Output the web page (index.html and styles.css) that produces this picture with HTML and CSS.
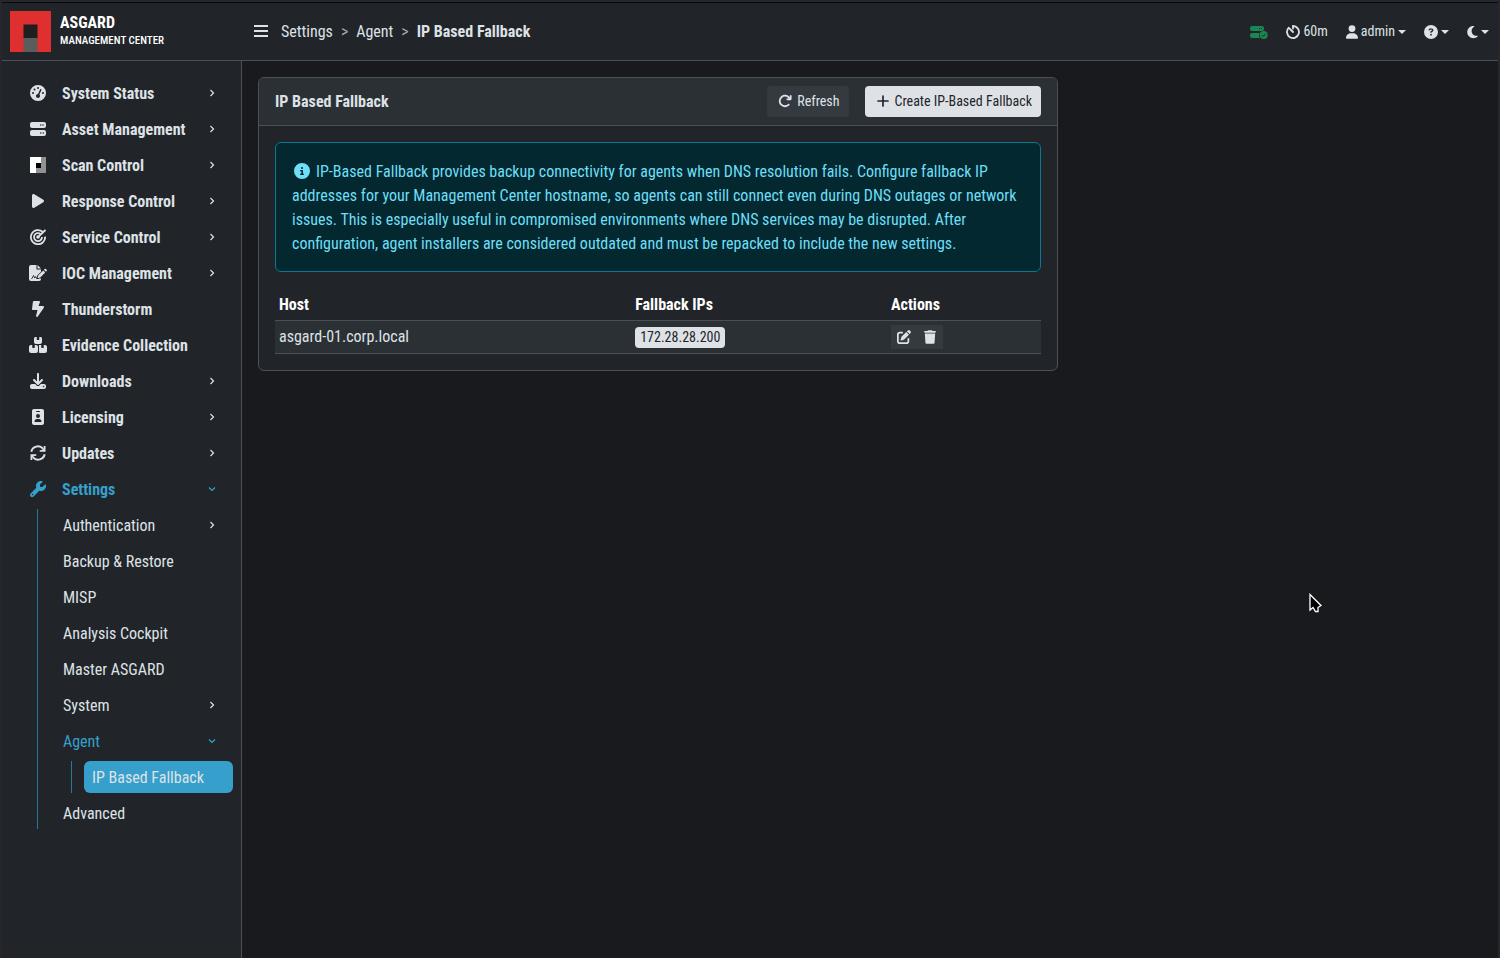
FILE: index.html
```html
<!DOCTYPE html>
<html lang="en">
<head>
    <meta charset="UTF-8">
    <meta name="viewport" content="width=device-width, initial-scale=1.0">
    <title>ASGARD Management Center - IP Based Fallback</title>
    <link rel="stylesheet" href="styles.css">
</head>
<body>

<!-- icons shared by the menu items -->
<svg class="sprite" aria-hidden="true">
    <symbol id="chevron-right" viewBox="0 0 10 10"><path d="M3.5 2l3 3-3 3" fill="none" stroke="currentColor" stroke-width="1.2"/></symbol>
    <symbol id="chevron-down" viewBox="0 0 10 10"><path d="M2 3.500l3 3 3-3" fill="none" stroke="currentColor" stroke-width="1.2"/></symbol>
</svg>

<header class="topbar">
    <a class="brand" href="#">
        <svg class="brand-logo" viewBox="0 0 41 41" aria-hidden="true">
            <path fill="#df2f2f" d="M0 0h41v41H0z"/>
            <path fill="#1f1f1f" d="M13.500 13.500h14v14h-14z"/>
            <path fill="#5b5d5c" d="M13.500 27h14v14h-14z"/>
        </svg>
        <span class="brand-text">
            <span class="brand-name">ASGARD</span>
            <span class="brand-sub">MANAGEMENT CENTER</span>
        </span>
    </a>
    <button class="menu-toggle" type="button" aria-label="Toggle menu">
        <svg width="14" height="13" viewBox="0 0 14 13"><path fill="currentColor" d="M0 0h14v2H0zM0 5h14v2H0zM0 10h14v2H0z"/></svg>
    </button>
    <nav class="breadcrumb" aria-label="Breadcrumb">
        <a href="#">Settings</a><span class="sep">&gt;</span><a href="#">Agent</a><span class="sep">&gt;</span><strong>IP Based Fallback</strong>
    </nav>
    <div class="top-actions">
        <a class="top-item status" href="#" aria-label="Server status">
            <svg width="18" height="14" viewBox="0 0 18 14">
                <path fill="currentColor" fill-rule="evenodd" d="M2 1h10a2 2 0 0 1 2 2v1a2 2 0 0 1-2 2H2a2 2 0 0 1-2-2V3a2 2 0 0 1 2-2zM9 3v1h1V3zM11 3v1h1V3zM2 8h7.500a4.800 4.800 0 0 0 .5 5H2a2 2 0 0 1-2-2v-1a2 2 0 0 1 2-2z"/>
                <circle cx="13.700" cy="10" r="4" fill="currentColor"/>
                <path d="M11.800 10l1.500 1.500 2.400-2.700" fill="none" stroke="#212529"/>
            </svg>
        </a>
        <a class="top-item session" href="#">
            <svg width="14" height="14" viewBox="0 0 14 14"><path d="M7 3.500V1a6 6 0 1 1-4.200 1.700M4 4l3 3" fill="none" stroke="currentColor" stroke-width="1.800" stroke-linecap="round"/></svg>
            <span>60m</span>
        </a>
        <button class="top-item user" type="button">
            <svg width="12" height="14" viewBox="0 0 448 512"><path fill="currentColor" d="M224 256A128 128 0 1 0 224 0a128 128 0 1 0 0 256zm-45.700 48C79.800 304 0 383.800 0 482.300C0 498.700 13.300 512 29.700 512H418.300c16.400 0 29.700-13.300 29.700-29.700C448 383.800 368.200 304 269.700 304H178.300z"/></svg>
            <span>admin</span>
            <i class="caret"></i>
        </button>
        <button class="top-item help" type="button" aria-label="Help">
            <svg width="14" height="14" viewBox="0 0 512 512"><path fill="currentColor" d="M256 512A256 256 0 1 0 256 0a256 256 0 1 0 0 512zM169.800 165.300c7.900-22.300 29.100-37.300 52.800-37.300h58.300c34.900 0 63.100 28.300 63.100 63.100c0 22.600-12.100 43.500-31.700 54.800L280 264.400c-.2 13-10.900 23.600-24 23.600c-13.300 0-24-10.700-24-24V250.500c0-8.600 4.600-16.500 12.100-20.800l44.300-25.400c4.700-2.700 7.600-7.700 7.600-13.100c0-8.400-6.800-15.100-15.100-15.100H222.600c-3.400 0-6.400 2.100-7.500 5.300l-.4 1.200c-4.400 12.500-18.200 19-30.600 14.600s-19-18.200-14.600-30.600l.4-1.200zM224 352a32 32 0 1 1 64 0 32 32 0 1 1 -64 0z"/></svg>
            <i class="caret"></i>
        </button>
        <button class="top-item theme" type="button" aria-label="Theme">
            <svg width="11" height="14" viewBox="0 0 384 512"><path fill="currentColor" d="M223.500 32C100 32 0 132.300 0 256S100 480 223.500 480c60.600 0 115.500-24.200 155.800-63.400c5-4.900 6.300-12.500 3.100-18.700s-10.100-9.700-17-8.500c-9.800 1.700-19.800 2.600-30.100 2.600c-96.900 0-175.500-78.800-175.500-176c0-65.800 36-123.100 89.300-153.300c6.100-3.500 9.200-10.500 7.700-17.300s-7.300-11.900-14.300-12.500c-6.300-.5-12.600-.8-19-.8z"/></svg>
            <i class="caret"></i>
        </button>
    </div>
</header>

<div class="layout">
    <nav class="sidebar" aria-label="Main menu">
        <ul class="menu">
            <li><a class="item" href="#">
                <svg class="icon" viewBox="0 0 512 512"><path fill="currentColor" d="M0 256a256 256 0 1 1 512 0A256 256 0 1 1 0 256zM288 96a32 32 0 1 0 -64 0 32 32 0 1 0 64 0zM256 416c35.300 0 64-28.700 64-64c0-17.400-6.900-33.100-18.100-44.600L366 161.700c5.300-12.100-.2-26.300-12.300-31.600s-26.300 .2-31.600 12.300L257.900 288c-.6 0-1.300 0-1.900 0c-35.300 0-64 28.700-64 64s28.700 64 64 64zM176 144a32 32 0 1 0 -64 0 32 32 0 1 0 64 0zM96 288a32 32 0 1 0 0-64 32 32 0 1 0 0 64zm352-32a32 32 0 1 0 -64 0 32 32 0 1 0 64 0z"/></svg>
                <span>System Status</span><svg class="chevron"><use href="#chevron-right"/></svg></a></li>
            <li><a class="item" href="#">
                <svg class="icon" viewBox="0 0 512 512"><path fill="currentColor" d="M64 32C28.700 32 0 60.700 0 96v64c0 35.300 28.700 64 64 64H448c35.300 0 64-28.700 64-64V96c0-35.300-28.700-64-64-64H64zm280 72a24 24 0 1 1 0 48 24 24 0 1 1 0-48zm48 24a24 24 0 1 1 48 0 24 24 0 1 1 -48 0zM64 288c-35.300 0-64 28.700-64 64v64c0 35.300 28.700 64 64 64H448c35.300 0 64-28.700 64-64V352c0-35.300-28.700-64-64-64H64zm280 72a24 24 0 1 1 0 48 24 24 0 1 1 0-48zm56 24a24 24 0 1 1 48 0 24 24 0 1 1 -48 0z"/></svg>
                <span>Asset Management</span><svg class="chevron"><use href="#chevron-right"/></svg></a></li>
            <li><a class="item" href="#">
                <svg class="icon" viewBox="0 0 16 16"><path fill="#fff" d="M0 0h16v16H0z"/><path fill="#919191" d="M11 0h5v16H6v-5h5z"/><path fill="#000" d="M6 6h5v5H6z"/></svg>
                <span>Scan Control</span><svg class="chevron"><use href="#chevron-right"/></svg></a></li>
            <li><a class="item" href="#">
                <svg class="icon" viewBox="0 0 384 512"><path fill="currentColor" d="M73 39c-14.800-9.100-33.400-9.400-48.500-.9S0 62.600 0 80V432c0 17.400 9.400 33.400 24.500 41.900s33.700 8.100 48.500-.9L361 297c14.300-8.700 23-24.200 23-41s-8.700-32.200-23-41L73 39z"/></svg>
                <span>Response Control</span><svg class="chevron"><use href="#chevron-right"/></svg></a></li>
            <li><a class="item" href="#">
                <svg class="icon" viewBox="0 0 16 16">
                    <g fill="none" stroke="currentColor" stroke-width="1.800">
                        <path d="M12.800 2.900A7.100 7.100 0 1 0 15.100 7.600"/>
                        <path d="M10.500 5A4 4 0 1 0 12 8"/>
                        <path d="M8 8l7.500-7"/>
                    </g>
                    <circle cx="8" cy="8" r="1.800" fill="currentColor"/>
                </svg>
                <span>Service Control</span><svg class="chevron"><use href="#chevron-right"/></svg></a></li>
            <li><a class="item" href="#">
                <svg class="icon" viewBox="0 0 18 16">
                    <path fill="currentColor" d="M2 0h5.500v4.500H12v2.300L8.300 10.500 7.500 13.500h4.500V14a2 2 0 0 1-2 2H2a2 2 0 0 1-2-2V2a2 2 0 0 1 2-2zM8.500 0L12 3.500H8.500z"/>
                    <path fill="currentColor" d="M14.200 5.500l2 2-5 5-2.700.7.700-2.700zM14.900 4.800l.7-.7a1 1 0 0 1 1.400 0l.6.6a1 1 0 0 1 0 1.400l-.7.700z"/>
                    <path d="M2.500 13.500h.5l1.500-3 1.200 2.500 1-1.500.8 2h2.500" fill="none" stroke="#212529" stroke-width=".9"/>
                </svg>
                <span>IOC Management</span><svg class="chevron"><use href="#chevron-right"/></svg></a></li>
            <li><a class="item" href="#">
                <svg class="icon" viewBox="0 0 384 512"><path fill="currentColor" d="M0 256L28.500 28c2-16 15.600-28 31.800-28H228.900c15 0 27.100 12.100 27.100 27.100c0 3.200-.6 6.500-1.700 9.500L208 160H347.300c20.200 0 36.700 16.400 36.700 36.700c0 7.400-2.200 14.600-6.400 20.700l-192.200 281c-5.900 8.600-15.600 13.700-25.900 13.700h-2.900c-15.700 0-28.500-12.800-28.500-28.500c0-2.300 .3-4.600 .9-6.900L176 288H32c-17.700 0-32-14.300-32-32z"/></svg>
                <span>Thunderstorm</span></a></li>
            <li><a class="item" href="#">
                <svg class="icon" viewBox="0 0 576 512"><path fill="currentColor" d="M248 0H208c-26.500 0-48 21.500-48 48V160c0 35.300 28.700 64 64 64H352c35.300 0 64-28.700 64-64V48c0-26.500-21.500-48-48-48H328V80c0 8.800-7.200 16-16 16H264c-8.800 0-16-7.200-16-16V0zM64 256c-35.300 0-64 28.700-64 64V448c0 35.300 28.700 64 64 64H224c35.300 0 64-28.700 64-64V320c0-35.300-28.700-64-64-64H184v80c0 8.800-7.200 16-16 16H120c-8.800 0-16-7.200-16-16V256H64zM352 512H512c35.300 0 64-28.700 64-64V320c0-35.300-28.700-64-64-64H472v80c0 8.800-7.200 16-16 16H408c-8.800 0-16-7.200-16-16V256H352c-15 0-28.800 5.100-39.700 13.800c4.900 10.400 7.700 22 7.700 34.200V464c0 12.200-2.800 23.800-7.700 34.200C323.200 506.900 337 512 352 512z"/></svg>
                <span>Evidence Collection</span></a></li>
            <li><a class="item" href="#">
                <svg class="icon" viewBox="0 0 512 512"><path fill="currentColor" d="M288 32c0-17.700-14.300-32-32-32s-32 14.300-32 32V274.700l-73.400-73.400c-12.500-12.500-32.800-12.500-45.300 0s-12.500 32.800 0 45.300l128 128c12.500 12.500 32.800 12.500 45.300 0l128-128c12.500-12.500 12.500-32.800 0-45.300s-32.800-12.500-45.300 0L288 274.700V32zM64 352c-35.300 0-64 28.700-64 64v32c0 35.300 28.700 64 64 64H448c35.300 0 64-28.700 64-64V416c0-35.300-28.700-64-64-64H346.500l-45.300 45.300c-25 25-65.500 25-90.500 0L165.500 352H64zm368 56a24 24 0 1 1 0 48 24 24 0 1 1 0-48z"/></svg>
                <span>Downloads</span><svg class="chevron"><use href="#chevron-right"/></svg></a></li>
            <li><a class="item" href="#">
                <svg class="icon" viewBox="0 0 384 512"><path fill="currentColor" d="M64 0C28.700 0 0 28.700 0 64V448c0 35.300 28.700 64 64 64H320c35.300 0 64-28.700 64-64V64c0-35.300-28.700-64-64-64H64zm96 320h64c44.200 0 80 35.800 80 80c0 8.800-7.200 16-16 16H96c-8.800 0-16-7.200-16-16c0-44.200 35.800-80 80-80zm-32-96a64 64 0 1 1 128 0 64 64 0 1 1 -128 0zM144 64h96c8.800 0 16 7.200 16 16s-7.200 16-16 16H144c-8.800 0-16-7.200-16-16s7.200-16 16-16z"/></svg>
                <span>Licensing</span><svg class="chevron"><use href="#chevron-right"/></svg></a></li>
            <li><a class="item" href="#">
                <svg class="icon" viewBox="0 0 16 16">
                    <path d="M1.300 6.800A6.800 6.800 0 0 1 13 3.600M14.700 9.200A6.800 6.800 0 0 1 3 12.400" fill="none" stroke="currentColor" stroke-width="2"/>
                    <path fill="currentColor" d="M15.500 1v5.800H9.700V5.300l2.200-.2 1.800-2V1zM.5 15V9.200h5.800v1.500l-2.200.2-1.800 2V15z"/>
                </svg>
                <span>Updates</span><svg class="chevron"><use href="#chevron-right"/></svg></a></li>
            <li><a class="item open" href="#">
                <svg class="icon" viewBox="0 0 512 512"><path fill="currentColor" d="M352 320c88.400 0 160-71.600 160-160c0-15.300-2.200-30.100-6.200-44.200c-3.100-10.800-16.400-13.200-24.300-5.300l-76.800 76.800c-3 3-7.100 4.700-11.300 4.700H336c-8.800 0-16-7.200-16-16V118.600c0-4.200 1.700-8.300 4.700-11.300l76.800-76.800c7.900-7.900 5.400-21.200-5.300-24.300C382.100 2.200 367.300 0 352 0C263.600 0 192 71.600 192 160c0 19.100 3.400 37.500 9.500 54.500L19.900 396.100C7.200 408.800 0 426.100 0 444.100C0 481.600 30.400 512 67.900 512c18 0 35.300-7.200 48-19.900L297.500 310.500c17 6.200 35.400 9.500 54.500 9.500zM80 408a24 24 0 1 1 0 48 24 24 0 1 1 0-48z"/></svg>
                <span>Settings</span><svg class="chevron"><use href="#chevron-down"/></svg></a>
                <ul class="submenu">
                    <li><a class="item" href="#"><span>Authentication</span><svg class="chevron"><use href="#chevron-right"/></svg></a></li>
                    <li><a class="item" href="#"><span>Backup &amp; Restore</span></a></li>
                    <li><a class="item" href="#"><span>MISP</span></a></li>
                    <li><a class="item" href="#"><span>Analysis Cockpit</span></a></li>
                    <li><a class="item" href="#"><span>Master ASGARD</span></a></li>
                    <li><a class="item" href="#"><span>System</span><svg class="chevron"><use href="#chevron-right"/></svg></a></li>
                    <li><a class="item open" href="#"><span>Agent</span><svg class="chevron"><use href="#chevron-down"/></svg></a>
                        <ul class="submenu nested">
                            <li><a class="item active" href="#" aria-current="page"><span>IP Based Fallback</span></a></li>
                        </ul>
                    </li>
                    <li><a class="item" href="#"><span>Advanced</span></a></li>
                </ul>
            </li>
        </ul>
    </nav>

    <main class="content">
        <section class="card">
            <div class="card-header">
                <h1>IP Based Fallback</h1>
                <button class="btn btn-dark" type="button">
                    <svg width="14" height="14" viewBox="0 0 512 512"><path fill="currentColor" d="M386.300 160H336c-17.700 0-32 14.300-32 32s14.300 32 32 32H464c17.700 0 32-14.300 32-32V64c0-17.700-14.300-32-32-32s-32 14.300-32 32v51.200L414.400 97.600c-87.500-87.500-229.300-87.500-316.800 0s-87.500 229.300 0 316.800s229.300 87.500 316.800 0c12.500-12.500 12.500-32.800 0-45.300s-32.800-12.500-45.300 0c-62.500 62.500-163.800 62.500-226.300 0s-62.500-163.800 0-226.300s163.800-62.500 226.300 0L386.300 160z"/></svg>
                    Refresh
                </button>
                <button class="btn btn-light" type="button">
                    <svg width="14" height="14" viewBox="0 0 14 14"><path d="M7 2v10M2 7h10" stroke="currentColor" stroke-width="1.700" stroke-linecap="round"/></svg>
                    Create IP-Based Fallback
                </button>
            </div>
            <div class="card-body">
                <p class="alert"><svg class="alert-icon" width="16" height="16" viewBox="0 0 512 512"><path fill="currentColor" d="M256 512A256 256 0 1 0 256 0a256 256 0 1 0 0 512zM216 336h24V272H216c-13.300 0-24-10.700-24-24s10.700-24 24-24h48c13.300 0 24 10.700 24 24v88h8c13.300 0 24 10.700 24 24s-10.700 24-24 24H216c-13.300 0-24-10.700-24-24s10.700-24 24-24zm40-208a32 32 0 1 1 0 64 32 32 0 1 1 0-64z"/></svg>IP-Based Fallback provides backup connectivity for agents when DNS resolution fails. Configure fallback IP addresses for your Management Center hostname, so agents can still connect even during DNS outages or network issues. This is especially useful in compromised environments where DNS services may be disrupted. After configuration, agent installers are considered outdated and must be repacked to include the new settings.</p>
                <table class="hosts">
                    <thead>
                        <tr><th class="col-host">Host</th><th class="col-ips">Fallback IPs</th><th>Actions</th></tr>
                    </thead>
                    <tbody>
                        <tr>
                            <td>asgard-01.corp.local</td>
                            <td><span class="badge">172.28.28.200</span></td>
                            <td>
                                <div class="actions">
                                    <button type="button" aria-label="Edit"><svg width="14" height="14" viewBox="0 0 512 512"><path fill="currentColor" d="M471.600 21.700c-21.900-21.900-57.300-21.900-79.200 0L362.300 51.700l97.900 97.900 30.100-30.100c21.900-21.900 21.900-57.300 0-79.200L471.600 21.700zm-299.200 220c-6.100 6.100-10.800 13.600-13.500 21.900l-29.600 88.800c-2.900 8.600-.6 18.100 5.800 24.600s15.900 8.700 24.600 5.800l88.800-29.600c8.200-2.700 15.700-7.400 21.900-13.500L437.700 172.300 339.700 74.300 172.400 241.700zM96 64C43 64 0 107 0 160V416c0 53 43 96 96 96H352c53 0 96-43 96-96V320c0-17.700-14.300-32-32-32s-32 14.300-32 32v96c0 17.700-14.300 32-32 32H96c-17.700 0-32-14.300-32-32V160c0-17.700 14.300-32 32-32h96c17.700 0 32-14.300 32-32s-14.300-32-32-32H96z"/></svg></button>
                                    <button type="button" aria-label="Delete"><svg width="12" height="14" viewBox="0 0 448 512"><path fill="currentColor" d="M135.200 17.700L128 32H32C14.300 32 0 46.300 0 64S14.300 96 32 96H416c17.700 0 32-14.300 32-32s-14.300-32-32-32H320l-7.200-14.300C307.400 6.800 296.300 0 284.200 0H163.800c-12.100 0-23.200 6.800-28.600 17.700zM416 128H32L53.200 467c1.600 25.300 22.600 45 47.900 45H346.900c25.300 0 46.300-19.700 47.900-45L416 128z"/></svg></button>
                                </div>
                            </td>
                        </tr>
                    </tbody>
                </table>
            </div>
        </section>
    </main>
</div>

<svg class="pointer" width="14" height="20" viewBox="0 0 14 20" aria-hidden="true"><path d="M1 1.500v15.500l3-2.500 2.500 4h2.500v-4L12 12.500z" fill="#000" stroke="#fff" stroke-width="1.300"/></svg>

</body>
</html>
```
FILE: styles.css
```css
* {
    box-sizing: border-box;
}
body {
    margin: 0;
    min-height: 100vh;
    display: flex;
    flex-direction: column;
    border: 2px solid #26272e;
    border-bottom: none;
    background-color: #191a1e;
    color: #dee2e6;
    font-family: "Roboto Condensed", "Liberation Sans Narrow", Roboto, sans-serif;
    font-size: 16px;
    line-height: 24px;
}
a {
    color: inherit;
    text-decoration: none;
}
button {
    font: inherit;
    color: inherit;
    background: none;
    border: none;
    padding: 0;
    cursor: pointer;
}
ul {
    list-style: none;
    margin: 0;
    padding: 0;
}
.sprite {
    display: none;
}

/* top bar */
.topbar {
    display: flex;
    align-items: center;
    height: 59px;
    padding: 0 8px;
    background-color: #212529;
    border-top: 1px solid #08090a;
    border-bottom: 1px solid #495057;
}
.brand {
    display: flex;
    align-items: center;
    gap: 9px;
    width: 244px;
}
.brand-logo {
    width: 41px;
    height: 41px;
}
.brand-text {
    display: flex;
    flex-direction: column;
    color: #fff;
}
.brand-name {
    font-size: 16px;
    font-weight: bold;
    line-height: 18px;
}
.brand-sub {
    font-size: 11px;
    font-weight: 500;
    line-height: 18px;
}
.menu-toggle {
    display: flex;
    margin-right: 13px;
}
.breadcrumb .sep {
    margin: 0 8px;
    color: #a5a9ad;
}
.top-actions {
    display: flex;
    align-items: center;
    gap: 18px;
    margin-left: auto;
    padding-right: 1px;
    font-size: 14px;
}
.top-item {
    display: flex;
    align-items: center;
    gap: 3px;
}
.top-item span {
    padding-bottom: 2px;
}
.status {
    color: #198754;
}
.caret {
    border: 4px solid transparent;
    border-top-color: currentColor;
    border-bottom: none;
}

/* sidebar */
.layout {
    display: flex;
    flex: 1;
}
.sidebar {
    width: 240px;
    flex-shrink: 0;
    padding: 16px 8px;
    background-color: #212529;
    border-right: 1px solid #495057;
}
.menu,
.submenu {
    display: flex;
    flex-direction: column;
    gap: 4px;
}
.item {
    display: flex;
    align-items: center;
    height: 32px;
    padding: 0 16px 0 19px;
    border-radius: 6px;
    font-weight: bold;
}
.item span {
    padding-top: 2px;
}
.icon {
    width: 18px;
    height: 16px;
    margin-right: 15px;
}
.chevron {
    width: 10px;
    height: 10px;
    margin-left: auto;
}
.open {
    color: #369fcb;
}
.submenu {
    margin: 4px 0 0 27px;
    padding-left: 17px;
    border-left: 1px solid #2b7797;
}
.submenu .item {
    padding-left: 8px;
    font-weight: normal;
}
.nested {
    margin-left: 16px;
    padding-left: 12px;
}
.submenu .active {
    background-color: #369fcb;
}

/* content */
.content {
    flex: 1;
    padding: 16px;
}
.card {
    max-width: 800px;
    background-color: #212529;
    border: 1px solid #495057;
    border-radius: 6px;
    overflow: hidden;
}
.card-header {
    display: flex;
    align-items: center;
    gap: 16px;
    padding: 8px 16px;
    background-color: #2b3035;
    border-bottom: 1px solid #495057;
}
.card-header h1 {
    flex: 1;
    margin: 0;
    font-size: 16px;
}
.btn {
    display: flex;
    align-items: center;
    gap: 5px;
    height: 31px;
    padding: 0 9px 1px 11px;
    border-radius: 4px;
    font-size: 14px;
}
.btn-dark {
    background-color: #343a40;
}
.btn-light {
    background-color: #dee2e6;
    color: #212529;
}
.card-body {
    padding: 16px;
}
.alert {
    margin: 0 0 16px;
    padding: 17px 16px 15px;
    background-color: #032830;
    border: 1px solid #087990;
    border-radius: 6px;
    color: #6edff6;
}
.alert-icon {
    margin: 0 6px 0 2px;
    vertical-align: -2px;
}
.hosts {
    width: 100%;
    border-collapse: collapse;
    table-layout: fixed;
}
.hosts th,
.hosts td {
    height: 33px;
    padding: 0 4px;
    border-bottom: 1px solid #495057;
    text-align: left;
}
.hosts th {
    height: 32px;
    padding-top: 2px;
    color: #fff;
}
.hosts td {
    background-color: #2b3035;
}
.col-host {
    width: 46.5%;
}
.col-ips {
    width: 33.4%;
}
.badge {
    display: inline-block;
    padding: 0 5px;
    border-radius: 4px;
    background-color: #dee2e6;
    color: #212529;
    font-size: 14px;
    line-height: 21px;
    vertical-align: middle;
}
.actions {
    display: inline-flex;
    height: 24px;
    background-color: #343a40;
    vertical-align: middle;
}
.actions button {
    display: flex;
    align-items: center;
    justify-content: center;
    width: 26px;
}

.pointer {
    position: absolute;
    top: 593px;
    left: 1309px;
}
```
